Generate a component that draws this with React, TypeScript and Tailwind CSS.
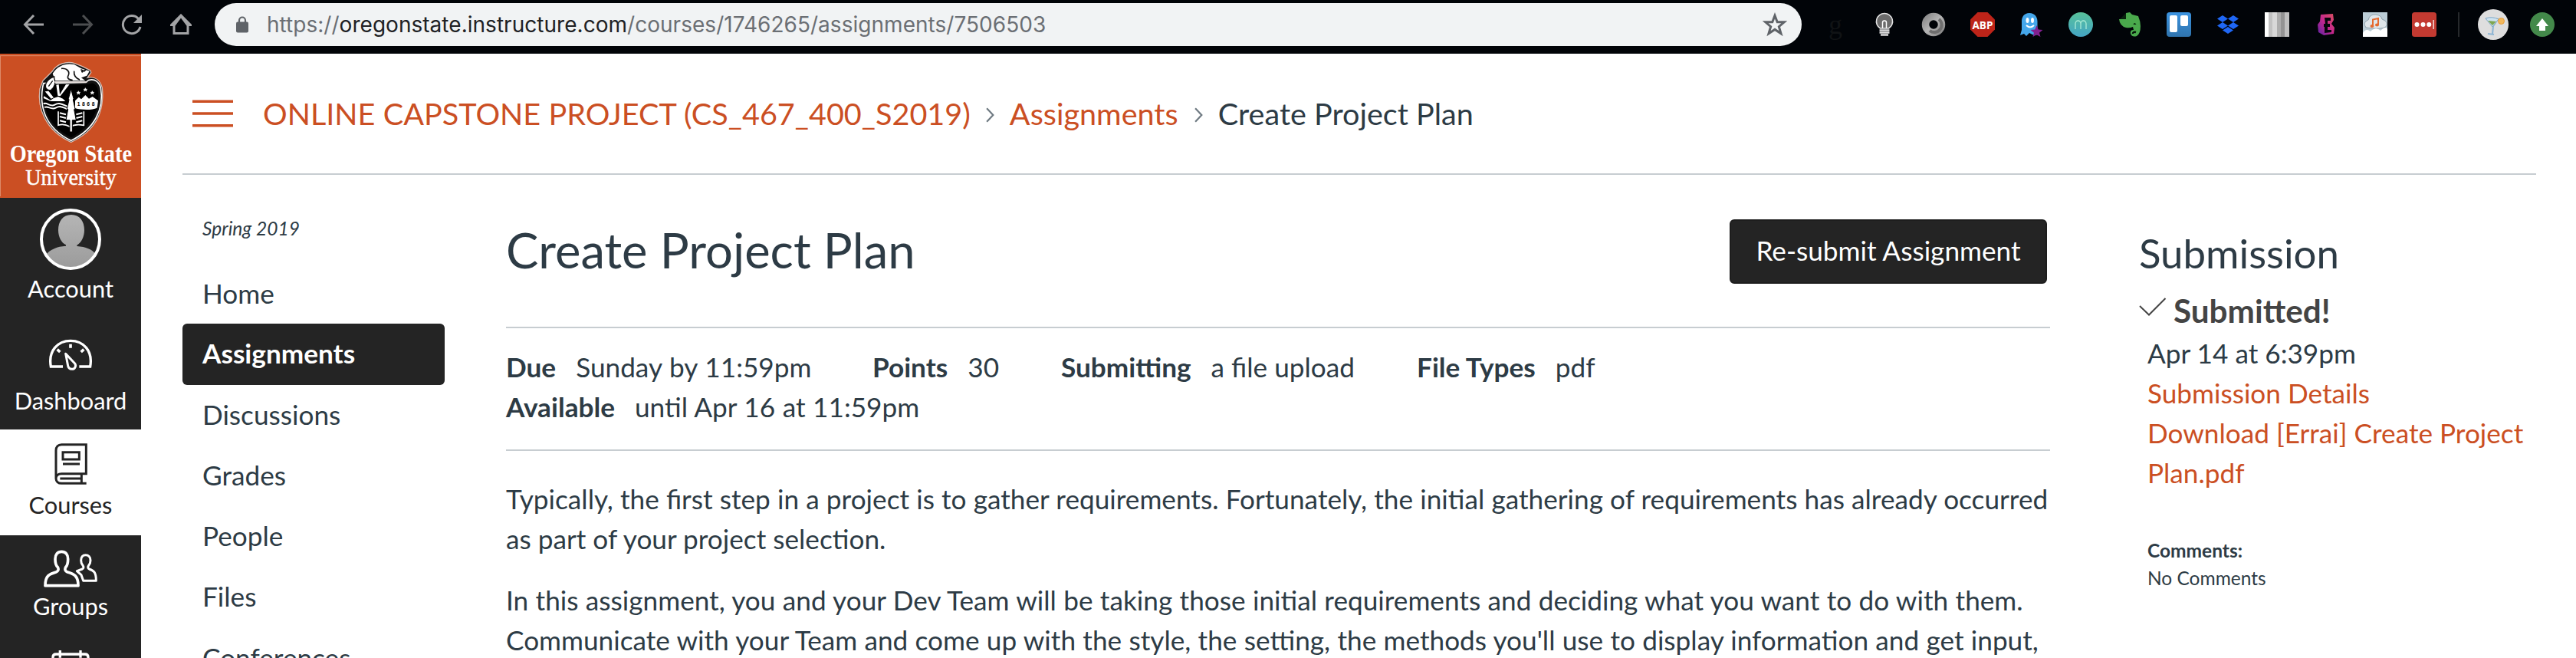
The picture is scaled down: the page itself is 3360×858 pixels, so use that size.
import React from 'react';

const Logo = () => (
  <svg width="184" height="188" viewBox="0 30 552 564" className="block shrink-0">
    <rect x="0" y="30" width="552" height="564" fill="#cb4f23" />
    <path d="M0 38H552M1.500 38V588" stroke="#dd8a68" strokeWidth="3" fill="none" />
    {/* crest outline */}
    <path d="M168 136L204 100C222 70 262 58 292 68L322 80L354 96L356 104L342 124C372 118 392 134 400 164C408 250 380 330 278 376C176 330 146 240 156 168Z" fill="#111" stroke="#fff" strokeOpacity=".65" strokeWidth="4" />
    <path d="M170 146C148 240 182 324 278 370C372 324 408 244 394 164C388 142 372 126 346 134L336 142Z" fill="none" stroke="#fff" strokeWidth="5" />
    <path d="M178 160C160 240 192 316 278 358C362 314 396 240 382 168C376 146 360 140 346 150L216 152Z" fill="#000" />
    {/* beaver */}
    <path d="M206 108C226 74 262 66 290 72L318 88L350 98L340 116L318 124L334 136H216Z" fill="#fff" />
    <path d="M240 88C262 86 276 100 266 118C262 128 272 132 284 134M290 98C288 116 296 126 312 132M316 92L330 98L336 92" fill="none" stroke="#111" strokeWidth="5" />
    <circle cx="322" cy="100" r="4" fill="#111" />
    <path d="M212 126C218 140 216 158 200 172C184 176 174 164 180 146C186 132 198 124 212 120Z" fill="#fff" stroke="#111" strokeWidth="4" />
    <path d="M206 136L190 158" stroke="#111" strokeWidth="4" />
    <path d="M214 141H340" stroke="#e5ddda" strokeWidth="6" />
    {/* sun rays */}
    <path d="M220 152L226 194L236 196L272 150H258L234 190L230 150ZM176 178L200 206L210 202L190 176ZM170 204L198 216H256L246 206L228 198L210 204L198 212L172 196Z" fill="#fff" />
    <path d="M170 226C184 218 196 240 214 230S244 228 264 236M174 240C188 232 200 252 218 242S246 240 262 246" fill="none" stroke="#fff" strokeWidth="6" />
    {/* mountains */}
    <path d="M294 244V214L308 200L318 208L334 192L348 206L362 198L384 214L380 242C360 252 320 250 294 244Z" fill="#fff" />
    <path d="M307 176l2 5h5l-4 3 2 5-5-3-5 3 2-5-4-3h5zM334 164l2 5h5l-4 3 2 5-5-3-5 3 2-5-4-3h5zM361 176l2 5h5l-4 3 2 5-5-3-5 3 2-5-4-3h5z" fill="#fff" stroke="#fff" strokeWidth="2" />
    <text x="302" y="234" fontSize="20" fontWeight="700" textLength="68" className="font-['Liberation_Sans']" fill="#000">1868</text>
    {/* book and tree */}
    <path d="M228 256V310C244 304 260 308 274 316C290 306 308 306 328 310V256" fill="none" stroke="#fff" strokeWidth="5" />
    <path d="M234 262l24 6M234 276l24 6M234 292l24 6M322 262l-24 6M322 276l-24 6M322 292l-24 6" stroke="#fff" strokeWidth="6" />
    <path d="M278 168L288 206L286 210L294 246L290 248L298 290H283V336H273V290H258L266 248L262 246L270 210L268 206Z" fill="#fff" stroke="#000" strokeWidth="3" />
    <text x="38" y="452" fontSize="92" fontWeight="700" textLength="478" lengthAdjust="spacingAndGlyphs" fill="#fff" className="font-['Liberation_Serif']">Oregon State</text>
    <text x="100" y="542" fontSize="90" textLength="355" lengthAdjust="spacingAndGlyphs" fill="#fff" stroke="#fff" strokeWidth="1.500" className="font-['Liberation_Serif']">University</text>
  </svg>
);

const Avatar = () => (
  <svg width="80" height="80" viewBox="156 66 240 240" className="block">
    <defs>
      <clipPath id="avatarClip"><circle cx="276" cy="186" r="110" /></clipPath>
      <linearGradient id="avatarTone" x1="0" y1="0" x2="0" y2="1">
        <stop offset="0" stopColor="#b5b5b5" />
        <stop offset="1" stopColor="#9b9b9b" />
      </linearGradient>
    </defs>
    <g clipPath="url(#avatarClip)" fill="url(#avatarTone)">
      <path d="M279 90C312 90 330 116 330 150C330 176 318 200 301 209V213C335 215 362 226 374 244V300H180V246C196 226 224 214 258 212V208C240 200 228 176 228 150C228 116 246 90 279 90Z" />
    </g>
    <circle cx="276" cy="186" r="114" fill="none" stroke="#fff" strokeWidth="12" />
  </svg>
);

const DashboardIcon = () => (
  <svg width="56" height="42" viewBox="192 576 168 126" className="block" fill="none" stroke="#fff">
    <path d="M246 684H199C188 622 226 583 276 583S364 622 353 684H310" strokeWidth="10" />
    <path d="M276 596V611M224 617L235 627M328 617L317 627" strokeWidth="11" />
    <path d="M257 634L293 672C300 682 292 694 282 694C272 694 266 686 265 676Z" strokeWidth="9" strokeLinejoin="round" />
  </svg>
);

const CoursesIcon = () => (
  <svg width="43" height="54" viewBox="210 84 129 162" className="block" fill="none" stroke="#242424" strokeWidth="9">
    <path d="M216 222V112C216 98 224 89 238 89H334V203H238C224 203 216 211 216 222C216 233 224 241 238 241H335M316 203V241M232 222H314" />
    <path d="M243 119H307V147H243ZM243 165H309" />
  </svg>
);

const GroupsIcon = () => (
  <svg width="70" height="49" viewBox="174 502 210 147" className="block" fill="none" stroke="#fff" strokeLinejoin="round">
    <path strokeWidth="11" d="M180 642C180 602 196 597 222 589C232 585 233 577 229 570C220 562 219 550 219 538C219 520 228 509 244 509S269 520 269 538C269 550 268 562 260 570C256 577 257 585 267 589C292 597 309 602 309 642Z" />
    <path strokeWidth="9" d="M329 623L321 600L304 585L325 577C331 574 331 568 327 563C321 556 320 550 320 543C320 530 327 522 338 522S357 530 357 543C357 550 356 556 350 563C346 568 346 574 352 577C370 584 379 588 379 623Z" />
  </svg>
);

const CalendarIcon = () => (
  <svg width="50" height="54" viewBox="202 895 150 162" className="block" fill="none" stroke="#fff" strokeWidth="10">
    <path d="M208 1050V922C208 914 212 910 220 910H334C342 910 346 914 346 922V1050ZM236 895V924M316 895V924" />
  </svg>
);

const Cell = ({ children }: { children: React.ReactNode }) => (
  <div className="flex h-16 w-16 shrink-0 items-center justify-center">{children}</div>
);

const Toolbar = () => (
  <div className="flex h-[70px] shrink-0 items-start bg-[#010408]">
    <div className="flex pl-3">
      <Cell>
        <svg width="28" height="26" viewBox="0 0 28 26" fill="none" stroke="#a3a4a6" strokeWidth="3"><path d="M27 13H3M14 1L2.500 13L14 25" /></svg>
      </Cell>
      <Cell>
        <svg width="28" height="26" viewBox="0 0 28 26" fill="none" stroke="#4c4e50" strokeWidth="3"><path d="M1 13H25M14 1L25.500 13L14 25" /></svg>
      </Cell>
      <Cell>
        <svg width="28" height="28" viewBox="0 0 28 28" fill="none" stroke="#a3a4a6" strokeWidth="3"><path d="M25 17A11.500 11.500 0 1 1 22.500 6.500" /><path d="M27 1V12H16Z" fill="#a3a4a6" stroke="none" /></svg>
      </Cell>
      <Cell>
        <svg width="28" height="28" viewBox="0 0 28 28" fill="none" stroke="#a3a4a6" strokeWidth="3"><path d="M5 14V25.500H23V14M1.500 14.500H5.500L14 3L22.500 14.500H26.500L14 2Z" /></svg>
      </Cell>
    </div>
    <div className="mt-1 ml-3 flex h-14 w-[2070px] items-center rounded-full bg-[#f1f3f4] pr-[19px] pl-7">
      <svg width="16" height="22" viewBox="0 0 16 22"><path d="M4 9V5.500a4 4 0 0 1 8 0V9" fill="none" stroke="#5f6368" strokeWidth="2.200" /><rect y="7.500" width="16" height="14" rx="2" fill="#5f6368" /></svg>
      <div className="ml-6 grow font-['Inter',sans-serif] text-[28px] leading-10 tracking-[0.03px] whitespace-nowrap text-[#6b6f74]">
        https://<span className="text-[#202124]">oregonstate.instructure.com</span>/courses/1746265/assignments/7506503
      </div>
      <svg width="32" height="32" viewBox="0 0 30 30" fill="none" stroke="#5f6368" strokeWidth="2.800"><path d="M15 4L18 12H26.500L20 17.500L22.500 26L15 21L7.500 26L10 17.500L3.500 12H12Z" /></svg>
    </div>
    <div className="flex pl-3">
      <Cell><span className="font-['Liberation_Serif',serif] text-[36px] leading-8 text-[#101315]">g</span></Cell>
      <Cell>
        <svg width="24" height="32" viewBox="0 0 24 32"><path d="M12 1.500a10.500 10.500 0 0 1 5.500 19.500H6.500A10.500 10.500 0 0 1 12 1.500Z" fill="#6b6b6b" stroke="#e4e4e4" strokeWidth="1.500" /><path d="M9.500 21V13.500a2.500 2.500 0 0 1 5 0V21" fill="none" stroke="#fff" strokeWidth="1.500" /><path d="M5.500 23.500h13M5.500 26.500h13M7 29.500h10" stroke="#ddd" strokeWidth="2.400" /></svg>
      </Cell>
      <Cell>
        <svg width="32" height="32" viewBox="0 0 32 32"><defs><linearGradient id="ringTone" x1="0" y1="0" x2="1" y2="1"><stop offset="0" stopColor="#8d8d8d" /><stop offset=".5" stopColor="#b5b5b5" /><stop offset="1" stopColor="#8a8a8a" /></linearGradient></defs><circle cx="16" cy="16" r="10.500" fill="none" stroke="url(#ringTone)" strokeWidth="9.500" /><path d="M23 9A9 9 0 0 1 11 24" stroke="#6e6e6e" strokeWidth="4" fill="none" /></svg>
      </Cell>
      <Cell>
        <svg width="32" height="32" viewBox="0 0 32 32"><path d="M9.500 0h13L32 9.500v13L22.500 32h-13L0 22.500v-13Z" fill="#bd2419" /><text x="2.500" y="21.500" fontSize="15" fontWeight="700" textLength="27" lengthAdjust="spacingAndGlyphs" fill="#fff" className="font-['Open_Sans']">ABP</text></svg>
      </Cell>
      <Cell>
        <svg width="30" height="32" viewBox="0 0 30 32"><path d="M12 1C19 1 22.500 6 22.500 12V20L25 29L18 30L12 27L8 31L5 28L0 30L2 23V12C2 6 5 1 12 1Z" fill="#45a7ea" /><ellipse cx="9.500" cy="10.500" rx="2" ry="3.500" fill="#fff" /><ellipse cx="16" cy="10.500" rx="2" ry="3.500" fill="#fff" /><path d="M8 17Q13 22 18 17" fill="none" stroke="#fff" strokeWidth="2" /><path d="M21.500 17L23.700 22.600L29.500 23L25 26.800L26.500 32L21.500 29.200L16.500 32L18 26.800L13.500 23L19.300 22.600Z" fill="#83208f" /></svg>
      </Cell>
      <Cell>
        <div className="flex size-8 items-center justify-center rounded-full bg-linear-to-b from-[#58c19a] to-[#45a5c4]">
          <svg width="16" height="12" viewBox="0 0 16 12" fill="none" stroke="#a9ead6" strokeWidth="1.300"><path d="M1 12V5A3.500 4 0 0 1 8 5V12M8 5A3.500 4 0 0 1 15 5V12" /></svg>
        </div>
      </Cell>
      <Cell>
        <svg width="28" height="32" viewBox="0 0 28 32"><path d="M9 1L14 0L17 3L25 5Q28 12 28 18Q28 28 23 31Q17 33 15 28Q14 23 19 23L18 19Q14 21 9 20Q1 18 0 9H9Z" fill="#4aa94c" /><path d="M1 9L9 1V9ZM18.500 16Q20 12 22.500 16Z" fill="#08230d" /><path d="M18 28Q18 25 22 26" fill="none" stroke="#061108" strokeWidth="2.500" /></svg>
      </Cell>
      <Cell>
        <svg width="32" height="32" viewBox="0 0 32 32"><defs><linearGradient id="boardTone" x1="0" y1="0" x2="0" y2="1"><stop offset="0" stopColor="#3b93e0" /><stop offset="1" stopColor="#2f74ae" /></linearGradient></defs><rect width="32" height="32" rx="4" fill="url(#boardTone)" /><rect x="4" y="4" width="10" height="22" rx="2" fill="#fff" /><rect x="18" y="4" width="10" height="14" rx="2" fill="#fff" /></svg>
      </Cell>
      <Cell>
        <svg width="28" height="24" viewBox="0 0 28 24" fill="#1f67f5"><path d="M7 0L14 4.500L7 9L0 4.500ZM21 0L28 4.500L21 9L14 4.500ZM7 9L14 13.500L7 18L0 13.500ZM21 9L28 13.500L21 18L14 13.500ZM14 15L21 19.500L14 24L7 19.500Z" /></svg>
      </Cell>
      <Cell>
        <div className="flex size-8">
          <div className="w-[5px] bg-white" /><div className="w-[5px] bg-[#c2c2c2]" /><div className="w-[6px] bg-[#d8d8d8]" /><div className="w-[5px] bg-[#adadad]" /><div className="w-[5px] bg-[#939393]" /><div className="w-[6px] bg-[#bfbfbf]" />
        </div>
      </Cell>
      <Cell>
        <svg width="22" height="28" viewBox="0 0 22 28"><defs><linearGradient id="letterTone" x1="1" y1="0" x2="0" y2="1"><stop offset="0" stopColor="#d9505f" /><stop offset=".5" stopColor="#c4278d" /><stop offset="1" stopColor="#5a23a5" /></linearGradient></defs><path d="M4 1L20 0L21 8L18 13L22 18L21 26L8 28L1 24L0 14L3 10Z" fill="url(#letterTone)" /><path d="M9 5H17V9H13V13H16V17H13V21H18V24L9 25V17H8V13H10Z" fill="#05060b" /></svg>
      </Cell>
      <Cell>
        <svg width="32" height="32" viewBox="0 0 32 32"><rect width="32" height="32" fill="#bccdd6" /><path d="M4 20Q-1 13 7 10Q9 2 17 3Q24 4 25 9Q34 12 30 19Q24 23 4 20Z" fill="#dfe6ea" stroke="#8fa1ac" /><path d="M0 27Q4 20 10 25Q17 18 23 24Q30 17 32 22V32H0Z" fill="#fff" /><path d="M13 18V9.500L20 8V16.500" fill="none" stroke="#e56a2e" strokeWidth="2" /><ellipse cx="12" cy="18" rx="2.500" ry="2" fill="#e56a2e" /><ellipse cx="18.500" cy="16.500" rx="2.500" ry="2" fill="#e56a2e" /></svg>
      </Cell>
      <Cell>
        <svg width="32" height="32" viewBox="0 0 32 32"><rect width="32" height="32" rx="3.500" fill="#c33a31" /><g fill="#fff"><circle cx="6.500" cy="16" r="3" /><circle cx="14.500" cy="16" r="3" /><circle cx="22.300" cy="16" r="3" /></g><path d="M28.200 10V22" stroke="#f3cfcb" strokeWidth="1.600" /></svg>
      </Cell>
    </div>
    <div className="mt-4 ml-3 h-8 w-0.5 bg-[#26292c]" />
    <div className="mt-3 ml-6 size-10">
      <svg width="40" height="40" viewBox="0 0 40 40"><circle cx="20" cy="20" r="20" fill="#dedede" /><path d="M10 12L26 13L20 22L19 32M13 32L21 33" fill="none" stroke="#8fb6d4" strokeWidth="2.200" /><path d="M10 12Q18 9 27 13L19 23Z" fill="#cfe3ef" stroke="#7fa8c8" /><path d="M13 15L24 16L19 21Z" fill="#7fa650" /><circle cx="30.500" cy="15.500" r="4" fill="#f2b85c" stroke="#e79c38" /></svg>
    </div>
    <div className="mt-4 ml-7 size-8">
      <svg width="32" height="32" viewBox="0 0 32 32"><circle cx="16" cy="16" r="16" fill="#43894a" /><path d="M16 8L24 18H20V24H12V18H8Z" fill="#fff" /></svg>
    </div>
  </div>
);

const Chevron = ({ className }: { className: string }) => (
  <svg width="11" height="20" viewBox="0 0 10 18" className={className} fill="none" stroke="#6f7a82" strokeWidth="2"><path d="M1 1L8.500 9L1 17" /></svg>
);

const navItems = ['Home', 'Assignments', 'Discussions', 'Grades', 'People', 'Files', 'Conferences'];

const Detail = ({ label, value, className }: { label: string; value: string; className: string }) => (
  <div className={className}>
    <span className="font-bold">{label}</span>
    <span className="ml-[26px]">{value}</span>
  </div>
);

export default function App() {
  return (
    <div className="flex h-[858px] w-[3360px] flex-col overflow-hidden bg-white font-['Lato',sans-serif] text-[35.2px] leading-[52px] text-[#2d3b45]">
      <Toolbar />
      <div className="flex min-h-0 grow">
        <nav className="flex w-[184px] shrink-0 flex-col items-center bg-[#242424] text-[30.8px] leading-9 text-white">
          <Logo />
          <div className="flex shrink-0 flex-col items-center pt-[14px]">
            <Avatar />
            <span className="mt-[7px]">Account</span>
          </div>
          <div className="flex shrink-0 flex-col items-center pt-[47px]">
            <DashboardIcon />
            <span className="mt-[21px]">Dashboard</span>
          </div>
          <div className="mt-[19px] flex h-[138px] w-full shrink-0 flex-col items-center bg-white pt-[18px] text-[#242424]">
            <CoursesIcon />
            <span className="mt-[9px]">Courses</span>
          </div>
          <div className="flex shrink-0 flex-col items-center pt-[19px]">
            <GroupsIcon />
            <span className="mt-[7px]">Groups</span>
          </div>
          <div className="shrink-0 pt-[39px]"><CalendarIcon /></div>
        </nav>
        <div className="flex min-w-0 grow flex-col pr-[52px] pl-[54px]">
          <header className="flex h-[158px] shrink-0 items-center border-b-2 border-[#c7cdd1] pl-[13px] text-[39.6px] text-[#cb4f23]">
            <svg width="53" height="36" viewBox="0 0 53 36" stroke="#cb4f23" strokeWidth="3.500"><path d="M0 2.300H53M0 18H53M0 33.700H53" /></svg>
            <span className="ml-[39px] whitespace-nowrap [word-spacing:0.3px]">ONLINE CAPSTONE PROJECT (CS_467_400_S2019)</span>
            <Chevron className="mt-1 ml-[20px]" />
            <span className="ml-[20px]">Assignments</span>
            <Chevron className="mt-1 ml-[21px]" />
            <span className="ml-[20px] whitespace-nowrap text-[#2d3b45]">Create Project Plan</span>
          </header>
          <div className="flex min-h-0 grow">
            <aside className="w-[342px] shrink-0 pt-[52px]">
              <div className="pl-[26px] text-[24.6px] leading-[36px] italic">Spring 2019</div>
              <ul className="mt-[26.5px]">
                {navItems.map((item) => (
                  <li
                    key={item}
                    className={
                      item === 'Assignments'
                        ? '-mb-[0.8px] h-[80px] rounded-md bg-[#242424] pt-[12px] pl-[26px] font-bold text-white'
                        : 'h-[79.2px] pt-[13px] pl-[26px]'
                    }
                  >
                    {item}
                  </li>
                ))}
              </ul>
            </aside>
            <main className="ml-[80px] w-[2014px] shrink-0 pt-[58px]">
              <div className="flex h-[142px] items-start justify-between border-b-2 border-[#c7cdd1] pr-1">
                <h1 className="pt-[2px] text-[63.4px] leading-[76px]">Create Project Plan</h1>
                <div className="flex h-[84px] w-[414px] items-center justify-center rounded-md border-2 border-[#1d1d1d] bg-[#242424] pb-1 text-white">Re-submit Assignment</div>
              </div>
              <div className="h-[160px] border-b-2 border-[#c7cdd1] pt-[24px]">
                <div className="flex whitespace-nowrap">
                  <Detail label="Due" value="Sunday by 11:59pm" className="w-[478px] [word-spacing:0.8px]" />
                  <Detail label="Points" value="30" className="w-[246px]" />
                  <Detail label="Submitting" value="a file upload" className="w-[464px]" />
                  <Detail label="File Types" value="pdf" className="" />
                </div>
                <Detail label="Available" value="until Apr 16 at 11:59pm" className="[word-spacing:0.5px]" />
              </div>
              <p className="mt-[36px] whitespace-nowrap">
                <span className="[word-spacing:0.15px]">Typically, the first step in a project is to gather requirements. Fortunately, the initial gathering of requirements has already occurred</span><br />
                as part of your project selection.
              </p>
              <p className="mt-[28px] whitespace-nowrap">
                <span className="[word-spacing:0.35px]">In this assignment, you and your Dev Team will be taking those initial requirements and deciding what you want to do with them.</span><br />
                <span className="[word-spacing:0.28px]">Communicate with your Team and come up with the style, the setting, the methods you'll use to display information and get input,</span>
              </p>
            </main>
            <aside className="ml-[116px] grow pt-[66px] whitespace-nowrap">
              <h2 className="text-[52.8px] leading-[72px]">Submission</h2>
              <div className="mt-[14px] flex items-start text-[42.24px] leading-[50px] font-bold text-[#444]">
                <svg width="36" height="24" viewBox="0 0 36 24" className="mt-[8px]" fill="none" stroke="#444" strokeWidth="2"><path d="M1 11L13 22.500L34.500 1" /></svg>
                <span className="ml-[9px]">Submitted!</span>
              </div>
              <div className="mt-[4px] pl-[11px]">
                <div>Apr 14 at 6:39pm</div>
                <div className="text-[#cb4f23]">Submission Details</div>
                <div className="text-[#cb4f23]">Download [Errai] Create Project<br />Plan.pdf</div>
                <div className="mt-[58px] text-[24.5px] leading-[36px]">
                  <div className="font-bold">Comments:</div>
                  <div>No Comments</div>
                </div>
              </div>
            </aside>
          </div>
        </div>
      </div>
    </div>
  );
}
